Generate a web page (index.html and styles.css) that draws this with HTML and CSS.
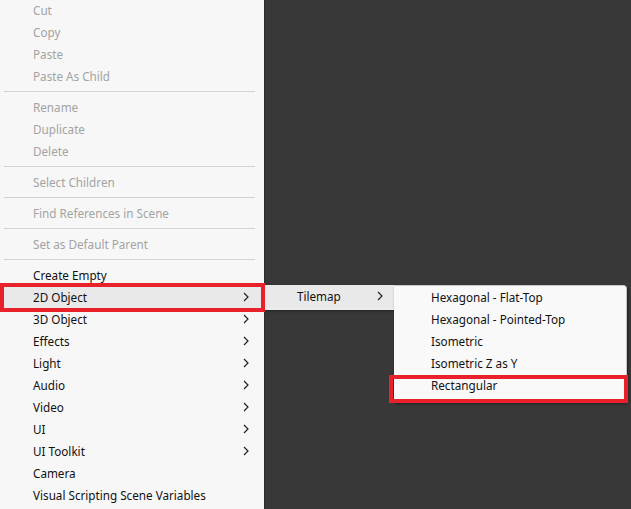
FILE: index.html
```html
<!DOCTYPE html>
<html lang="en">
<head>
    <meta charset="UTF-8">
    <meta name="viewport" content="width=device-width, initial-scale=1.0">
    <title>Hierarchy context menu</title>
    <link rel="stylesheet" href="styles.css">
</head>
<body>

    <div class="menu main-menu">
        <div class="item disabled">Cut</div>
        <div class="item disabled">Copy</div>
        <div class="item disabled">Paste</div>
        <div class="item disabled">Paste As Child</div>
        <div class="separator"></div>
        <div class="item disabled">Rename</div>
        <div class="item disabled">Duplicate</div>
        <div class="item disabled">Delete</div>
        <div class="separator"></div>
        <div class="item disabled">Select Children</div>
        <div class="separator"></div>
        <div class="item disabled">Find References in Scene</div>
        <div class="separator"></div>
        <div class="item disabled">Set as Default Parent</div>
        <div class="separator"></div>
        <div class="item">Create Empty</div>
        <div class="item sub active">2D Object<svg class="chevron" viewBox="0 0 6 10"><path d="M1 1l4 4-4 4"/></svg></div>
        <div class="item sub">3D Object<svg class="chevron" viewBox="0 0 6 10"><path d="M1 1l4 4-4 4"/></svg></div>
        <div class="item sub">Effects<svg class="chevron" viewBox="0 0 6 10"><path d="M1 1l4 4-4 4"/></svg></div>
        <div class="item sub">Light<svg class="chevron" viewBox="0 0 6 10"><path d="M1 1l4 4-4 4"/></svg></div>
        <div class="item sub">Audio<svg class="chevron" viewBox="0 0 6 10"><path d="M1 1l4 4-4 4"/></svg></div>
        <div class="item sub">Video<svg class="chevron" viewBox="0 0 6 10"><path d="M1 1l4 4-4 4"/></svg></div>
        <div class="item sub">UI<svg class="chevron" viewBox="0 0 6 10"><path d="M1 1l4 4-4 4"/></svg></div>
        <div class="item sub">UI Toolkit<svg class="chevron" viewBox="0 0 6 10"><path d="M1 1l4 4-4 4"/></svg></div>
        <div class="item">Camera</div>
        <div class="item">Visual Scripting Scene Variables</div>
    </div>

    <div class="menu tilemap-menu">
        <div class="item sub active">Tilemap<svg class="chevron" viewBox="0 0 6 10"><path d="M1 1l4 4-4 4"/></svg></div>
    </div>

    <div class="menu tile-menu">
        <div class="item">Hexagonal - Flat-Top</div>
        <div class="item">Hexagonal - Pointed-Top</div>
        <div class="item">Isometric</div>
        <div class="item">Isometric Z as Y</div>
        <div class="item">Rectangular</div>
    </div>

    <div class="mark mark-2d"></div>
    <div class="mark mark-rect"></div>

</body>
</html>
```

FILE: styles.css
```css
body {
    font-family: "Noto Sans", "Noto Sans CJK KR", sans-serif;
    font-size: 11.7px;
    background-color: #383838;
    margin: 0;
    height: 509px;
    overflow: hidden;
    position: relative;
}
.menu {
    background-color: #f7f7f7;
    color: #111111;
}
.main-menu {
    width: 264px;
    min-height: 520px;
    margin-top: -1px;
    border-right: 1px solid #2c2c2c;
}
.item {
    height: 22px;
    line-height: 22px;
    padding-left: 33px;
    display: flex;
    align-items: center;
    white-space: nowrap;
}
.item.disabled {
    color: #a3a3a3;
}
.item.active {
    background-color: #e9e9e9;
}
.chevron {
    width: 6px;
    height: 10px;
    margin-left: auto;
    margin-right: 15px;
    fill: none;
    stroke: #222222;
    stroke-width: 1.2;
}
.separator {
    height: 1px;
    background-color: #d3d3d3;
    margin: 4px 9px 4px 4px;
}
.tilemap-menu {
    position: absolute;
    left: 265px;
    top: 285px;
    width: 129px;
    padding: 0 0 3px;
    background-color: #ececec;
    box-shadow: 0 1px 3px rgba(0, 0, 0, 0.35);
}
.tilemap-menu .item {
    padding-left: 32px;
}
.tilemap-menu .chevron {
    margin-right: 11px;
}
.tile-menu {
    position: absolute;
    left: 394px;
    top: 285px;
    width: 232px;
    padding: 0 0 5px;
    border: 1px solid #c8c8c8;
    border-left: none;
    border-radius: 0 4px 4px 0;
    background-color: #f9f9f9;
    box-shadow: 1px 2px 3px rgba(0, 0, 0, 0.45);
}
.tile-menu .item {
    padding-left: 37px;
}
.mark {
    position: absolute;
    border: 4px solid #e8212a;
}
.mark-2d {
    left: 0;
    top: 283px;
    width: 257px;
    height: 21px;
}
.mark-rect {
    left: 389px;
    top: 375px;
    width: 231px;
    height: 20px;
}
```
